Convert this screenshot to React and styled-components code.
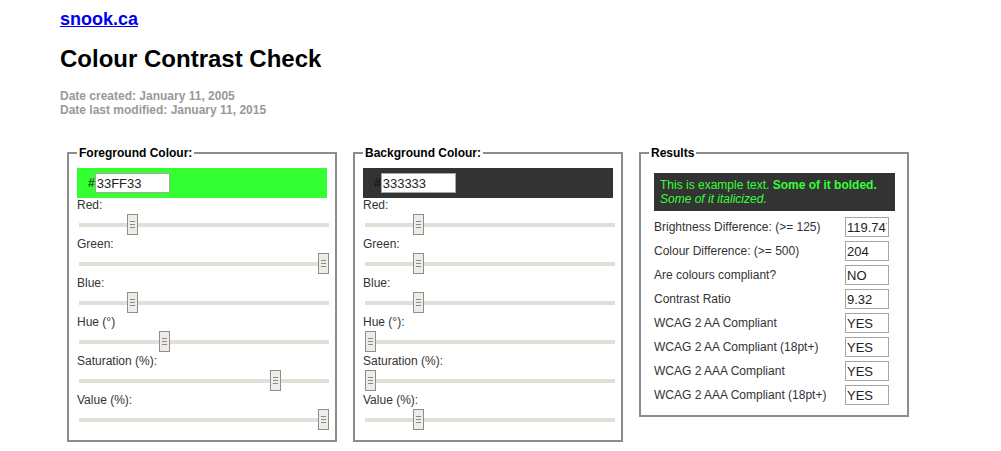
import React from 'react';
import styled, { createGlobalStyle } from 'styled-components';

const GlobalStyle = createGlobalStyle`
  html, body {
    margin: 0;
    padding: 0;
    background: #fff;
  }
  body {
    font-family: "Liberation Sans", Arial, sans-serif;
  }
`;

const Page = styled.div`
  padding: 9px 0 0 60px;
`;

const SiteLink = styled.a`
  display: block;
  width: max-content;
  font-size: 18px;
  line-height: 20px;
  font-weight: bold;
  color: #0000ee;
  text-decoration: underline;
`;

const Title = styled.h1`
  margin: 16px 0 0;
  font-size: 24px;
  line-height: 28px;
  font-weight: bold;
  color: #000;
`;

const Dates = styled.div`
  margin-top: 16px;
  font-size: 12px;
  line-height: 14px;
  font-weight: bold;
  color: #999;
`;

const Panels = styled.div`
  display: flex;
  align-items: flex-start;
  gap: 16px;
  margin: 29px 0 0 7px;
`;

const Fieldset = styled.fieldset`
  box-sizing: border-box;
  width: 270px;
  margin: 0;
  padding: 8px;
  border: 2px solid #8c8c8c;
  min-width: 0;
`;

const Legend = styled.legend`
  padding: 0 2px;
  font-size: 12px;
  line-height: 14px;
  font-weight: bold;
  color: #000;
`;

const Swatch = styled.div`
  display: flex;
  align-items: center;
  height: 30px;
  padding-left: 11px;
  background: ${({ $colour }) => $colour};
  font-size: 12px;
  color: #111;
`;

const HexInput = styled.input`
  box-sizing: border-box;
  width: 75px;
  height: 20px;
  margin: 0;
  padding: 0 1px;
  border: 1px solid #a5a5a5;
  background: #fff;
  font-family: "Liberation Sans", Arial, sans-serif;
  font-size: 13px;
  color: #222;
  outline: none;
`;

const Label = styled.div`
  font-size: 12px;
  line-height: 15px;
  color: #333;
`;

const SliderBox = styled.div`
  position: relative;
  height: 24px;
  margin-left: 2px;
  width: 250px;
`;

const Track = styled.div`
  position: absolute;
  left: 0;
  right: 0;
  top: 10px;
  height: 4px;
  background: #e2ded8;
`;

const Thumb = styled.div`
  position: absolute;
  top: 1px;
  box-sizing: border-box;
  width: 11px;
  height: 21px;
  border: 1px solid #8e8e8e;
  background: #efece8;
  display: flex;
  align-items: center;
  justify-content: center;

  &::after {
    content: '';
    width: 5px;
    height: 7px;
    background: repeating-linear-gradient(#8a8a8a 0 1px, transparent 1px 3px);
  }
`;

const Sample = styled.div`
  margin: 5px 4px 0 5px;
  padding: 5px 6px;
  background: #333333;
  color: #33ff33;
  font-size: 12px;
  line-height: 14px;
`;

const ResultRows = styled.div`
  margin-top: 4px;
`;

const ResultRow = styled.div`
  display: flex;
  align-items: center;
  justify-content: space-between;
  height: 24px;
  padding: 0 10px 0 5px;
  font-size: 12px;
  color: #333;
`;

const ResultInput = styled.input`
  box-sizing: border-box;
  width: 44px;
  height: 20px;
  margin: 0;
  padding: 0 1px;
  border: 1px solid #a5a5a5;
  background: #fff;
  font-family: "Liberation Sans", Arial, sans-serif;
  font-size: 13px;
  color: #222;
  outline: none;
`;

function Slider({ value }) {
  return (
    <SliderBox>
      <Track />
      <Thumb style={{ left: `calc(${value} * (100% - 11px))` }} />
    </SliderBox>
  );
}

function ColourPanel({ title, hex, colour, values }) {
  return (
    <Fieldset>
      <Legend>{title}</Legend>
      <Swatch $colour={colour}>
        #<HexInput defaultValue={hex} />
      </Swatch>
      {values.map(([label, v]) => (
        <div key={label}>
          <Label>{label}</Label>
          <Slider value={v} />
        </div>
      ))}
    </Fieldset>
  );
}

const foreground = [
  ['Red:', 51 / 255],
  ['Green:', 1],
  ['Blue:', 51 / 255],
  ['Hue (°)', 120 / 360],
  ['Saturation (%):', 0.8],
  ['Value (%):', 1],
];

const background = [
  ['Red:', 51 / 255],
  ['Green:', 51 / 255],
  ['Blue:', 51 / 255],
  ['Hue (°):', 0],
  ['Saturation (%):', 0],
  ['Value (%):', 0.2],
];

const results = [
  ['Brightness Difference: (>= 125)', '119.747'],
  ['Colour Difference: (>= 500)', '204'],
  ['Are colours compliant?', 'NO'],
  ['Contrast Ratio', '9.32'],
  ['WCAG 2 AA Compliant', 'YES'],
  ['WCAG 2 AA Compliant (18pt+)', 'YES'],
  ['WCAG 2 AAA Compliant', 'YES'],
  ['WCAG 2 AAA Compliant (18pt+)', 'YES'],
];

export default function App() {
  return (
    <>
      <GlobalStyle />
      <Page>
        <SiteLink href="#">snook.ca</SiteLink>
        <Title>Colour Contrast Check</Title>
        <Dates>
          Date created: January 11, 2005
          <br />
          Date last modified: January 11, 2015
        </Dates>
        <Panels>
          <ColourPanel title="Foreground Colour:" hex="33FF33" colour="#33ff33" values={foreground} />
          <ColourPanel title="Background Colour:" hex="333333" colour="#333333" values={background} />
          <Fieldset>
            <Legend>Results</Legend>
            <Sample>
              This is example text. <b>Some of it bolded.</b> <i>Some of it italicized.</i>
            </Sample>
            <ResultRows>
              {results.map(([label, value]) => (
                <ResultRow key={label}>
                  <span>{label}</span>
                  <ResultInput defaultValue={value} />
                </ResultRow>
              ))}
            </ResultRows>
          </Fieldset>
        </Panels>
      </Page>
    </>
  );
}
